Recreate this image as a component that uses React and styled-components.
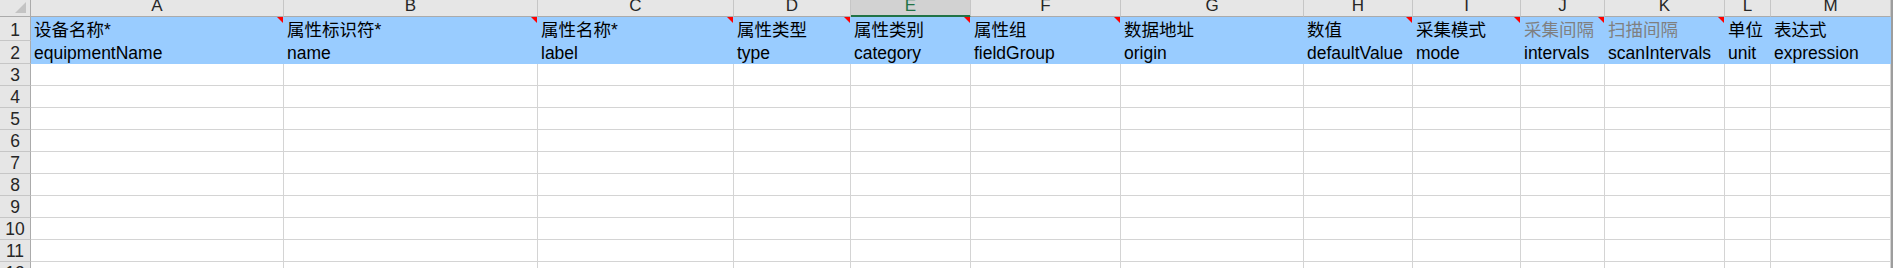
import React from "react";
import styled, { createGlobalStyle, css } from "styled-components";

const GlobalStyle = createGlobalStyle`
  html, body {
    margin: 0;
    padding: 0;
    background: #ffffff;
    overflow: hidden;
  }
  body {
    font-family: "Liberation Sans", Arial, "Noto Sans CJK SC", sans-serif;
  }
`;

const COLUMNS = [
  { key: "A", width: 253, zh: "设备名称*", en: "equipmentName", note: true },
  { key: "B", width: 254, zh: "属性标识符*", en: "name", note: true },
  { key: "C", width: 196, zh: "属性名称*", en: "label", note: true },
  { key: "D", width: 117, zh: "属性类型", en: "type", note: true },
  { key: "E", width: 120, zh: "属性类别", en: "category", note: true },
  { key: "F", width: 150, zh: "属性组", en: "fieldGroup", note: true },
  { key: "G", width: 183, zh: "数据地址", en: "origin" },
  { key: "H", width: 109, zh: "数值", en: "defaultValue", note: true },
  { key: "I", width: 108, zh: "采集模式", en: "mode", note: true },
  { key: "J", width: 84, zh: "采集间隔", en: "intervals", note: true, muted: true },
  { key: "K", width: 120, zh: "扫描间隔", en: "scanIntervals", note: true, muted: true },
  { key: "L", width: 46, zh: "单位", en: "unit" },
  { key: "M", width: 120, zh: "表达式", en: "expression" },
];

const SELECTED = "E";
const EMPTY_ROWS = [3, 4, 5, 6, 7, 8, 9, 10, 11, 12];

const Frame = styled.div`
  display: flex;
  width: 1893px;
  height: 268px;
  overflow: hidden;
`;

const Sheet = styled.div`
  display: grid;
  grid-template-columns: 31px ${COLUMNS.map((c) => `${c.width}px`).join(" ")};
  grid-template-rows: 17px 24px 23px repeat(${EMPTY_ROWS.length}, 22px);
  align-content: start;
`;

const Edge = styled.div`
  width: 2px;
  flex: none;
  background: #9d9d9d;
`;

const Tail = styled.div`
  flex: 1;
  background: #ffffff;
`;

const Corner = styled.div`
  box-sizing: border-box;
  background: #e6e6e6;
  border-right: 1px solid #ababab;
  border-bottom: 1px solid #ababab;
  display: flex;
  align-items: flex-start;
  justify-content: flex-start;
`;

const headerText = css`
  font-family: "Liberation Sans", Arial, sans-serif;
  color: #262626;
`;

const ColHeader = styled.div`
  ${headerText};
  font-size: 17px;
  line-height: 16px;
  padding-bottom: 2px;
  box-sizing: border-box;
  background: ${(p) => (p.$selected ? "#d2d2d2" : "#e6e6e6")};
  color: ${(p) => (p.$selected ? "#217346" : "#262626")};
  border-right: 1px solid #c6c6c6;
  border-bottom: 1px solid ${(p) => (p.$selected ? "#217346" : "#ababab")};
  box-shadow: ${(p) => (p.$selected ? "inset 0 -1px 0 #217346" : "none")};
  display: flex;
  align-items: flex-end;
  justify-content: center;
  overflow: hidden;
`;

const RowHeader = styled.div`
  ${headerText};
  font-size: 17.5px;
  line-height: 18px;
  padding-bottom: 1px;
  box-sizing: border-box;
  background: #e6e6e6;
  border-right: 1px solid #ababab;
  border-bottom: 1px solid #c6c6c6;
  display: flex;
  align-items: flex-end;
  justify-content: center;
  overflow: hidden;
`;

const Cell = styled.div`
  position: relative;
  box-sizing: border-box;
  background: ${(p) => (p.$fill ? "#99ccff" : "#ffffff")};
  border-right: 1px solid ${(p) => (p.$fill ? "#99ccff" : "#d4d4d4")};
  border-bottom: 1px solid ${(p) => (p.$fill ? "#99ccff" : "#d4d4d4")};
  padding: 0 3px;
  display: flex;
  align-items: flex-end;
  overflow: hidden;
  white-space: nowrap;
  font-family: "Liberation Sans", Arial, "Noto Sans CJK SC", sans-serif;
  font-size: 17.5px;
  line-height: 20px;
  color: ${(p) => (p.$muted ? "#7f7f7f" : "#000000")};

  ${(p) =>
    p.$note &&
    css`
      &::after {
        content: "";
        position: absolute;
        top: 0;
        right: 0;
        width: 0;
        height: 0;
        border-top: 6px solid #ff0000;
        border-left: 6px solid transparent;
      }
    `}
`;

const CornerMark = () => (
  <svg width="30" height="16" viewBox="0 0 30 16" aria-hidden="true">
    <polygon points="26,2 26,13 15,13" fill="#c3c3c3" />
  </svg>
);

export default function App() {
  return (
    <>
      <GlobalStyle />
      <Frame>
        <Sheet>
          <Corner>
            <CornerMark />
          </Corner>
          {COLUMNS.map((c) => (
            <ColHeader key={`h-${c.key}`} $selected={c.key === SELECTED}>
              {c.key}
            </ColHeader>
          ))}

          <RowHeader>1</RowHeader>
          {COLUMNS.map((c) => (
            <Cell key={`1-${c.key}`} $fill $note={c.note} $muted={c.muted}>
              {c.zh}
            </Cell>
          ))}

          <RowHeader>2</RowHeader>
          {COLUMNS.map((c) => (
            <Cell key={`2-${c.key}`} $fill>
              {c.en}
            </Cell>
          ))}

          {EMPTY_ROWS.map((r) => (
            <React.Fragment key={`r-${r}`}>
              <RowHeader>{r}</RowHeader>
              {COLUMNS.map((c) => (
                <Cell key={`${r}-${c.key}`} />
              ))}
            </React.Fragment>
          ))}
        </Sheet>
        <Edge />
        <Tail />
      </Frame>
    </>
  );
}
